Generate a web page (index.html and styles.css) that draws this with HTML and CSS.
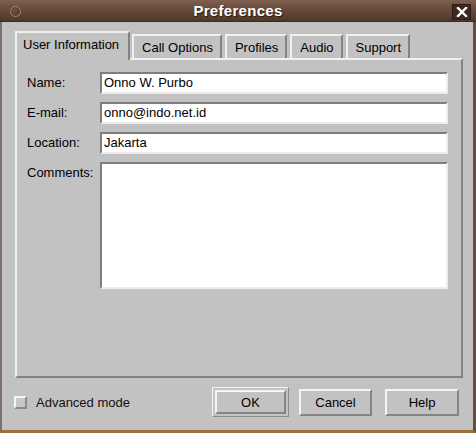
FILE: index.html
```html
<!DOCTYPE html>
<html>
<head>
<meta charset="utf-8">
<link rel="stylesheet" href="styles.css">
</head>
<body>
<div class="window">
  <div class="titlebar">
    <span class="menu-dot"></span>
    <span class="title">Preferences</span>
    <span class="close">
      <svg width="12" height="10" viewBox="0 0 12 10"><path d="M2 1 L10 9 M10 1 L2 9" stroke="#fff" stroke-width="2.4" stroke-linecap="square"/></svg>
    </span>
  </div>
  <div class="body">
    <div class="tabs">
      <div class="tab active">User Information</div>
      <div class="tab">Call Options</div>
      <div class="tab">Profiles</div>
      <div class="tab">Audio</div>
      <div class="tab">Support</div>
    </div>
    <div class="panel">
      <div class="row"><label class="lbl">Name:</label><div class="field">Onno W. Purbo</div></div>
      <div class="row"><label class="lbl">E-mail:</label><div class="field">onno@indo.net.id</div></div>
      <div class="row"><label class="lbl">Location:</label><div class="field">Jakarta</div></div>
      <div class="row"><label class="lbl">Comments:</label><div class="field area"></div></div>
    </div>
    <div class="footer">
      <div class="check"><span class="box"></span><span>Advanced mode</span></div>
      <div class="buttons">
        <div class="focus"><div class="btn">OK</div></div>
        <div class="btn">Cancel</div>
        <div class="btn help">Help</div>
      </div>
    </div>
  </div>
</div>
</body>
</html>
```
FILE: styles.css
```css
* { box-sizing: border-box; }
html, body { margin: 0; padding: 0; }
body {
  width: 476px; height: 433px; overflow: hidden;
  font-family: "Liberation Sans", Arial, sans-serif;
  font-size: 13px; color: #000;
  background: #c2c2c2;
}
.window {
  width: 476px; height: 433px;
  display: flex; flex-direction: column;
  background: #c2c2c2;
  border-left: 2px solid #7d7068;
  border-right: 3px solid #5e4e44;
  border-bottom: 3px solid #a0703c;
}
.titlebar {
  height: 22px; flex: none;
  margin-left: -2px; margin-right: -3px;
  background: linear-gradient(#806050, #6a4c3c 40%, #4e382c);
  display: flex; align-items: center; justify-content: center;
  position: relative;
  border-bottom: 1px solid #3a2a20;
}
.menu-dot {
  position: absolute; left: 10px; top: 6px;
  width: 11px; height: 11px; border-radius: 50%;
  border: 1px solid #a08878;
  background: radial-gradient(circle at 40% 35%, #6e5244, #4a3428);
}
.title {
  color: #fff; font-weight: bold; font-size: 15px;
  letter-spacing: 0.3px;
  text-shadow: 1px 1px 1px #2a1a10;
}
.close {
  position: absolute; right: 5px; top: 4px;
  width: 19px; height: 16px;
  background: #3c2a20;
  border: 1px solid #2a1c14;
  display: flex; align-items: center; justify-content: center;
}
.body {
  flex: 1;
  padding: 11px 11px 0 13px;
  display: flex; flex-direction: column;
}
.tabs {
  display: flex; align-items: flex-end; gap: 3px;
  height: 27px; position: relative; z-index: 2;
  margin-bottom: -2px;
}
.tab {
  height: 24px;
  padding: 4px 7px 0 8px;
  border-top: 2px solid #f0f0f0;
  border-left: 2px solid #f0f0f0;
  border-right: 2px solid #828282;
  background: #c2c2c2;
  font-size: 13px;
  white-space: nowrap;
  margin-bottom: 2px;
}
.tab.active {
  height: 29px;
  margin-bottom: 0;
  margin-right: -1px;
  padding: 4px 9px 0 6px;
}
.panel {
  height: 320px;
  width: 448px;
  border-top: 2px solid #f0f0f0;
  border-left: 2px solid #f0f0f0;
  border-right: 2px solid #828282;
  border-bottom: 2px solid #828282;
  padding: 12px 13px 0 10px;
  display: flex; flex-direction: column; gap: 8px;
}
.row { display: flex; align-items: flex-start; }
.lbl { width: 73px; flex: none; padding-top: 3px; }
.field {
  flex: 1; height: 22px;
  background: #fff;
  border-top: 2px solid #7e7e7e;
  border-left: 2px solid #7e7e7e;
  border-right: 2px solid #ececec;
  border-bottom: 2px solid #ececec;
  padding: 1px 2px;
  white-space: nowrap;
}
.field.area { height: 127px; }
.footer {
  display: flex; align-items: center; justify-content: space-between;
  margin-top: 9px; margin-left: -1px; margin-right: 3px;
}
.check { display: flex; align-items: center; gap: 9px; color: #111; }
.box {
  width: 13px; height: 13px;
  background: #c8c8c8;
  border-top: 2px solid #f4f4f4;
  border-left: 2px solid #f4f4f4;
  border-right: 2px solid #8a8a8a;
  border-bottom: 2px solid #8a8a8a;
}
.buttons { display: flex; align-items: center; gap: 10px; }
.focus {
  padding: 2px;
  border: 1px solid #f2f2f2;
  border-right-color: #8a8a8a;
  border-bottom-color: #8a8a8a;
}
.btn {
  height: 27px;
  display: flex; align-items: center; justify-content: center;
  border-top: 2px solid #f4f4f4;
  border-left: 2px solid #f4f4f4;
  border-right: 2px solid #848484;
  border-bottom: 2px solid #848484;
  background: #c2c2c2;
  width: 73px;
}
.btn.help { width: 74px; margin-left: 3px; }
.focus .btn { width: 71px; height: 24px; }
```
